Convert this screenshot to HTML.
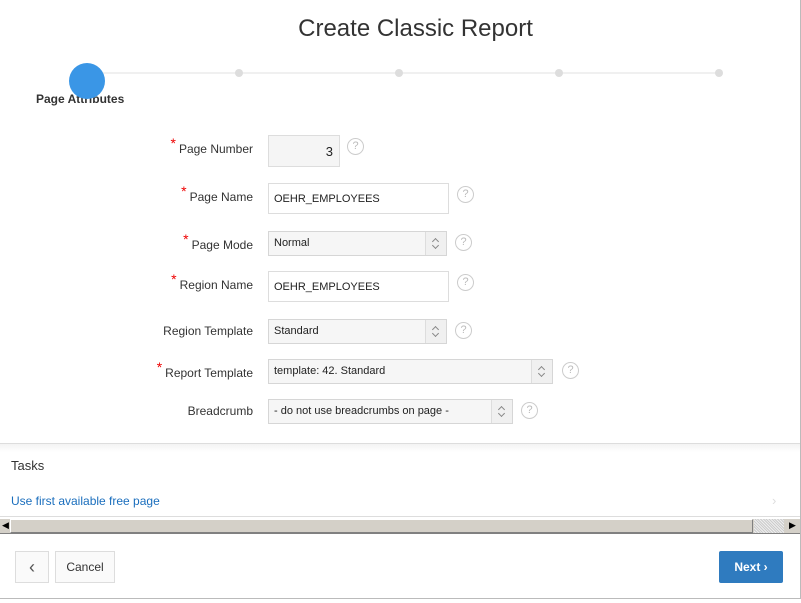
<!DOCTYPE html>
<html><head><style>
body{margin:0;width:801px;height:603px;background:#fff;font-family:"Liberation Sans",sans-serif;position:relative;overflow:hidden;font-size:12px;color:#333}
.a{position:absolute}
.lbl{position:absolute;right:548px;font-size:12px;color:#333}
.lbl i{color:#e00;font-style:normal;font-size:14px;position:relative;top:-5px;margin-right:3px}
.in{position:absolute;left:268px;border:1px solid #ddd;background:#fff;box-sizing:border-box;font-size:11px;padding-left:5px;color:#222}
.sel{background:#f6f6f6;border-color:#d6d6d6}
.sel .ar{position:absolute;right:0;top:0;bottom:0;width:20px;border-left:1px solid #ddd;background:#f0f0f0}
.sel .ar:before{content:"";position:absolute;left:7px;top:7px;width:4px;height:4px;border-left:1px solid #888;border-top:1px solid #888;transform:rotate(45deg)}
.sel .ar:after{content:"";position:absolute;left:7px;top:11px;width:4px;height:4px;border-right:1px solid #888;border-bottom:1px solid #888;transform:rotate(45deg)}
.h{position:absolute;width:15px;height:15px;border:1px solid #ccc;border-radius:50%;color:#bbb;font-size:11px;text-align:center;line-height:15px}
.dot{position:absolute;width:8px;height:8px;border-radius:50%;background:#ddd;top:69px}
</style></head><body>
<div class="a" style="left:0;top:0;width:800px;height:598px;border-right:1px solid #bbb;border-bottom:1px solid #bbb;background:#fff"></div>
<div class="a" style="left:0;right:0;top:15px;text-align:center;font-size:24px;color:#333;padding-left:30px">Create Classic Report</div>
<div class="a" style="left:90px;top:72px;width:630px;height:2px;background:#f0f0f0"></div>
<div class="dot" style="left:235px"></div><div class="dot" style="left:395px"></div><div class="dot" style="left:555px"></div><div class="dot" style="left:715px"></div>
<div class="a" style="left:36px;top:92px;font-size:12px;font-weight:bold;color:#333">Page Attributes</div>
<div class="a" style="left:69px;top:63px;width:36px;height:36px;border-radius:50%;background:#3a96e6"></div>

<div class="lbl" style="top:140px"><i>*</i>Page Number</div>
<div class="in" style="top:135px;width:72px;height:32px;background:#f5f5f5;text-align:right;padding-right:6px;line-height:32px;font-size:13px">3</div>
<div class="h" style="left:347px;top:138px">?</div>

<div class="lbl" style="top:188px"><i>*</i>Page Name</div>
<div class="in" style="top:183px;width:181px;height:31px;line-height:31px">OEHR_EMPLOYEES</div>
<div class="h" style="left:457px;top:186px">?</div>

<div class="lbl" style="top:236px"><i>*</i>Page Mode</div>
<div class="in sel" style="top:231px;width:179px;height:25px;line-height:23px">Normal<div class="ar"></div></div>
<div class="h" style="left:455px;top:234px">?</div>

<div class="lbl" style="top:276px"><i>*</i>Region Name</div>
<div class="in" style="top:271px;width:181px;height:31px;line-height:31px">OEHR_EMPLOYEES</div>
<div class="h" style="left:457px;top:274px">?</div>

<div class="lbl" style="top:324px">Region Template</div>
<div class="in sel" style="top:319px;width:179px;height:25px;line-height:23px">Standard<div class="ar"></div></div>
<div class="h" style="left:455px;top:322px">?</div>

<div class="lbl" style="top:364px"><i>*</i>Report Template</div>
<div class="in sel" style="top:359px;width:285px;height:25px;line-height:23px">template: 42. Standard<div class="ar"></div></div>
<div class="h" style="left:562px;top:362px">?</div>

<div class="lbl" style="top:404px">Breadcrumb</div>
<div class="in sel" style="top:399px;width:245px;height:25px;line-height:23px">- do not use breadcrumbs on page -<div class="ar"></div></div>
<div class="h" style="left:521px;top:402px">?</div>

<div class="a" style="left:0;top:443px;width:800px;height:1px;background:#ddd"></div>
<div class="a" style="left:0;top:444px;width:800px;height:8px;background:linear-gradient(#f3f3f3,#fff)"></div>
<div class="a" style="left:11px;top:458px;font-size:13px;color:#333">Tasks</div>
<div class="a" style="left:11px;top:494px;font-size:12px;color:#1a6ebd">Use first available free page</div>
<div class="a" style="left:772px;top:493px;color:#ddd;font-size:13px">›</div>
<div class="a" style="left:0;top:516px;width:800px;height:1px;background:#ddd"></div>
<div class="a" style="left:0;top:518px;width:800px;height:16px;background:#d4d0c8;border-top:1px solid #fff;border-bottom:1px solid #808080;box-sizing:border-box"></div>
<div class="a" style="left:10px;top:519px;width:743px;height:14px;background:#d4d0c8;border:1px solid #808080;border-left-color:#fff;border-top-color:#fff;box-sizing:border-box"></div>
<div class="a" style="left:754px;top:519px;width:30px;height:14px;background:repeating-linear-gradient(45deg,#ccc 0 1px,#eee 1px 2px)"></div>
<div class="a" style="left:2px;top:520px;font-size:9px;color:#000">◀</div>
<div class="a" style="left:789px;top:520px;font-size:9px;color:#000">▶</div>

<div class="a" style="left:15px;top:551px;width:34px;height:32px;border:1px solid #ddd;box-sizing:border-box;background:#fafafa;text-align:center;line-height:30px;font-size:18px;color:#555">‹</div>
<div class="a" style="left:55px;top:551px;width:60px;height:32px;border:1px solid #ddd;box-sizing:border-box;background:#fafafa;text-align:center;line-height:30px;font-size:12px;color:#333">Cancel</div>
<div class="a" style="left:719px;top:551px;width:64px;height:32px;border-radius:2px;background:#2f7bbf;text-align:center;line-height:32px;font-size:12px;font-weight:bold;color:#fff">Next ›</div>
</body></html>
